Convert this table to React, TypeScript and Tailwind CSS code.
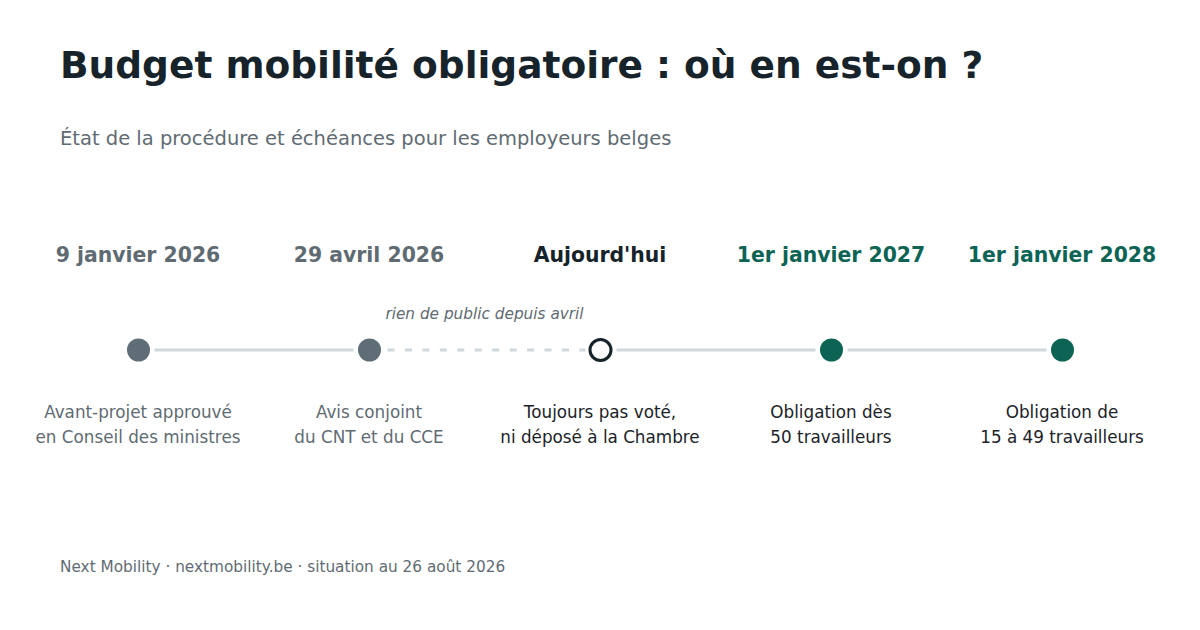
import React from "react";

const nodes = [
  { date: "9 janvier 2026", dateCls: "text-[#5f6b73]", desc: ["Avant-projet approuvé", "en Conseil des ministres"], descCls: "text-[#5f6b73]" },
  { date: "29 avril 2026", dateCls: "text-[#5f6b73]", desc: ["Avis conjoint", "du CNT et du CCE"], descCls: "text-[#5f6b73]" },
  { date: "Aujourd'hui", dateCls: "text-[#17232b]", desc: ["Toujours pas voté,", "ni déposé à la Chambre"], descCls: "text-[#1b2329]" },
  { date: "1er janvier 2027", dateCls: "text-[#0d6454]", desc: ["Obligation dès", "50 travailleurs"], descCls: "text-[#1b2329]" },
  { date: "1er janvier 2028", dateCls: "text-[#0d6454]", desc: ["Obligation de", "15 à 49 travailleurs"], descCls: "text-[#1b2329]" },
];

function Track() {
  const cx = [115.5, 346.5, 577.5, 808.5, 1039.5];
  const y = 13;
  const line = "#cfd8dc";
  return (
    <svg width="1155" height="26" viewBox="0 0 1155 26" className="block">
      <line x1={cx[0] + 16} y1={y} x2={cx[1] - 16} y2={y} stroke={line} strokeWidth="3" />
      <line x1={cx[1] + 18} y1={y} x2={cx[2] - 15} y2={y} stroke={line} strokeWidth="3" strokeDasharray="7 10.45" />
      <line x1={cx[2] + 16} y1={y} x2={cx[3] - 16} y2={y} stroke={line} strokeWidth="3" />
      <line x1={cx[3] + 16} y1={y} x2={cx[4] - 16} y2={y} stroke={line} strokeWidth="3" />
      <circle cx={cx[0]} cy={y} r="11.5" fill="#5f6e76" />
      <circle cx={cx[1]} cy={y} r="11.5" fill="#5f6e76" />
      <circle cx={cx[2]} cy={y} r="10.5" fill="#ffffff" stroke="#17232b" strokeWidth="3" />
      <circle cx={cx[3]} cy={y} r="11.5" fill="#0d6454" />
      <circle cx={cx[4]} cy={y} r="11.5" fill="#0d6454" />
    </svg>
  );
}

export default function App() {
  return (
    <div className="w-[1200px] h-[630px] bg-white overflow-hidden font-['DejaVu_Sans',sans-serif]">
      <div className="px-[60px]">
        <h1 className="mt-[42px] text-[37.5px] leading-[46px] font-bold text-[#17232b] whitespace-nowrap">
          Budget mobilité obligatoire : où en est-on ?
        </h1>
        <p className="mt-[38px] text-[19.5px] leading-[26px] text-[#5f6b73] whitespace-nowrap">
          État de la procédure et échéances pour les employeurs belges
        </p>
      </div>

      <div className="pl-[22.5px]">
        <div className="mt-[89px] grid grid-cols-[repeat(5,231px)]">
          {nodes.map((n) => (
            <div key={n.date} className={`text-center text-[20.4px] leading-[28px] font-bold whitespace-nowrap ${n.dateCls}`}>
              {n.date}
            </div>
          ))}
        </div>

        <div className="mt-[35px] grid grid-cols-[repeat(10,115.5px)]">
          <div className="col-start-3 col-span-4 text-center text-[15.3px] leading-[20px] italic text-[#5f6b73] whitespace-nowrap">
            rien de public depuis avril
          </div>
        </div>

        <div className="mt-[13px]">
          <Track />
        </div>

        <div className="mt-[37px] grid grid-cols-[repeat(5,231px)]">
          {nodes.map((n) => (
            <div key={n.date} className={`text-center text-[16.8px] leading-[25px] whitespace-nowrap ${n.descCls}`}>
              <div>{n.desc[0]}</div>
              <div>{n.desc[1]}</div>
            </div>
          ))}
        </div>
      </div>

      <div className="px-[60px] mt-[107px] text-[15.3px] leading-[20px] text-[#5f6b73] whitespace-nowrap">
        Next Mobility · nextmobility.be · situation au 26 août 2026
      </div>
    </div>
  );
}
